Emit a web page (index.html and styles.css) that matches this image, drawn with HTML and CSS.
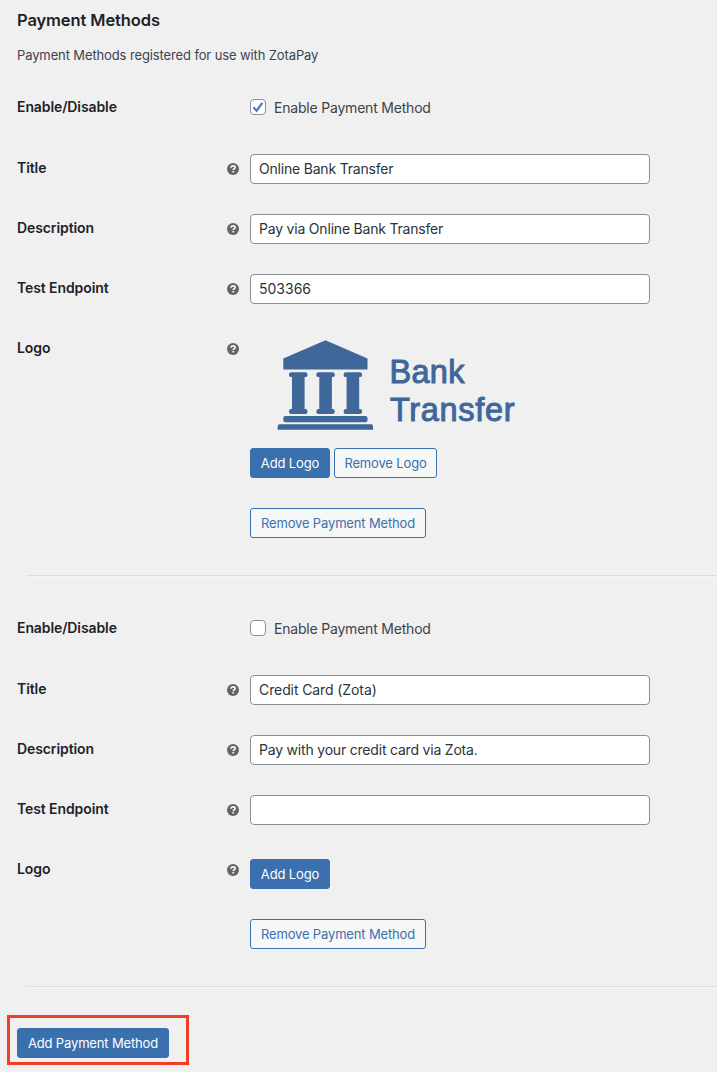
FILE: index.html
```
<!DOCTYPE html>
<html lang="en">
<head>
<meta charset="utf-8">
<title>Payment Methods</title>
<link rel="stylesheet" href="styles.css">
</head>
<body>
<svg width="0" height="0" class="defs">
  <symbol id="help" viewBox="0 0 12 12">
    <circle cx="6" cy="6" r="6" fill="#646464"/>
    <path d="M4 4.700C4.100 3.400 5 2.900 6.100 2.900c1.200 0 2 .6 2 1.500 0 1.300-1.900 1.300-1.900 2.700" fill="none" stroke="#f0f0f1" stroke-width="1.700"/>
    <rect x="5.300" y="7.900" width="1.800" height="1.600" fill="#f0f0f1"/>
  </symbol>
</svg>
<main class="page">
  <h2 class="heading"><span>Payment Methods</span></h2>
  <p class="intro"><span>Payment Methods registered for use with ZotaPay</span></p>

  <section class="method">
    <div class="row row-check">
      <div class="label"><span>Enable/Disable</span></div>
      <label class="check"><span class="box"><svg width="14" height="14" viewBox="0 0 14 14"><path d="M2.500 7.300 5.600 10.700 11.300 2.900" fill="none" stroke="#3f7fc6" stroke-width="2.200"/></svg></span><span class="check-text">Enable Payment Method</span></label>
    </div>
    <div class="row">
      <div class="label"><span>Title</span></div><svg class="help"><use href="#help"/></svg>
      <div class="input"><span>Online Bank Transfer</span></div>
    </div>
    <div class="row">
      <div class="label"><span>Description</span></div><svg class="help"><use href="#help"/></svg>
      <div class="input"><span>Pay via Online Bank Transfer</span></div>
    </div>
    <div class="row">
      <div class="label"><span>Test Endpoint</span></div><svg class="help"><use href="#help"/></svg>
      <div class="input"><span class="number">503366</span></div>
    </div>
    <div class="row">
      <div class="label"><span>Logo</span></div><svg class="help"><use href="#help"/></svg>
      <div class="field">
        <svg class="logo" width="280" height="114" viewBox="250 334 280 114">
          <g fill="#3f6799">
            <path d="M325.500 340.300 367.500 358.500V369.500H283.300V358.500Z"/>
            <g id="pillar">
              <rect x="289" y="372.300" width="18.500" height="4.800" rx="2.200"/>
              <rect x="292" y="374" width="12.600" height="38"/>
              <rect x="289" y="409" width="18.500" height="5" rx="2.200"/>
            </g>
            <use href="#pillar" x="27.300"/>
            <use href="#pillar" x="54.600"/>
            <rect x="283.300" y="416" width="84.200" height="6.200" rx="2"/>
            <path d="M279.700 424.200H371.200Q373 424.200 373 426.200V429.700H277.700V426.200Q277.700 424.200 279.700 424.200Z"/>
          </g>
          <g class="logo-text">
            <text x="389.500" y="382.600" textLength="75">Bank</text>
            <text x="390" y="420.800" textLength="124.500">Transfer</text>
          </g>
        </svg>
        <div class="buttons"><button class="btn primary add-logo">Add Logo</button><button class="btn remove-logo">Remove Logo</button></div>
      </div>
    </div>
    <div class="row row-remove"><button class="btn remove-method">Remove Payment Method</button></div>
  </section>
  <div class="rule"></div>

  <section class="method">
    <div class="row row-check">
      <div class="label"><span>Enable/Disable</span></div>
      <label class="check"><span class="box"></span><span class="check-text">Enable Payment Method</span></label>
    </div>
    <div class="row">
      <div class="label"><span>Title</span></div><svg class="help"><use href="#help"/></svg>
      <div class="input"><span class="card-title">Credit Card (Zota)</span></div>
    </div>
    <div class="row">
      <div class="label"><span>Description</span></div><svg class="help"><use href="#help"/></svg>
      <div class="input"><span>Pay with your credit card via Zota.</span></div>
    </div>
    <div class="row">
      <div class="label"><span>Test Endpoint</span></div><svg class="help"><use href="#help"/></svg>
      <div class="input"></div>
    </div>
    <div class="row">
      <div class="label"><span>Logo</span></div><svg class="help"><use href="#help"/></svg>
      <div class="field field-empty"><div class="buttons"><button class="btn primary add-logo">Add Logo</button></div></div>
    </div>
    <div class="row row-remove"><button class="btn remove-method">Remove Payment Method</button></div>
  </section>
  <div class="rule"></div>

  <div class="highlight"><button class="btn primary add-method">Add Payment Method</button></div>
</main>
</body>
</html>
```
FILE: styles.css
```
* { box-sizing: border-box; }
body {
  margin: 0;
  background: #f0f0f1;
  color: #3c434a;
  font-family: Inter, "Liberation Sans", sans-serif;
  font-size: 13px;
  overflow: hidden;
}
.defs { position: absolute; }
.page { height: 1072px; padding-top: 8px; overflow: hidden; }
.heading {
  margin: 0 0 0 17px;
  font-size: 16.500px;
  line-height: 24px;
  font-weight: 600;
  letter-spacing: -0.1px;
  color: #1d2327;
}
.intro { margin: 13px 0 1px 17px; line-height: 20px; letter-spacing: -0.12px; }
.method { padding-top: 12px; }
.row {
  display: grid;
  grid-template-columns: 210px 23px 400px;
  padding: 15px 0 15px 17px;
  align-items: start;
}
.row-check { height: 61px; grid-template-columns: 233px 400px; }
.label {
  padding-top: 4px;
  line-height: 20px;
  font-size: 14px;
  font-weight: 600;
  letter-spacing: -0.1px;
  color: #1d2327;
}
.help { width: 12px; height: 12px; margin-top: 9px; }
.check {
  display: flex;
  align-items: center;
  gap: 8px;
  height: 30px;
  font-size: 14px;
  letter-spacing: -0.2px;
}
.check-text { padding-bottom: 2px; }
.box {
  width: 16px;
  height: 16px;
  border: 1px solid #8c8f94;
  border-radius: 4px;
  background: #fff;
  display: block;
  margin-top: -2px;
}
.box svg { display: block; }
.input {
  height: 30px;
  border: 1px solid #8c8f94;
  border-radius: 4px;
  background: #fff;
  color: #2c3338;
  font-size: 14px;
  line-height: 28px;
  padding-left: 8px;
  letter-spacing: -0.2px;
}
.input span { display: block; }
.number { letter-spacing: 0; }
.card-title { letter-spacing: -0.1px; }
.logo { display: block; }
.logo-text {
  font-family: "Liberation Sans", Arial, sans-serif;
  font-size: 32.500px;
  fill: #3f6799;
  stroke: #3f6799;
  stroke-width: 1px;
}
.field-empty { padding-top: 4px; }
.buttons { display: flex; gap: 4px; }
.btn {
  height: 30px;
  padding: 0;
  border: 1px solid #3b70ae;
  border-radius: 3px;
  background: #f6f7f7;
  color: #3b70ae;
  font: 13px/28px Inter, "Liberation Sans", sans-serif;
  letter-spacing: -0.15px;
  white-space: nowrap;
}
.primary { background: #3b70ae; color: #fff; }
.add-logo { width: 80px; }
.remove-logo { width: 103px; }
.remove-method { width: 176px; }
.add-method { width: 152px; }
.row-remove { display: block; padding-left: 250px; }
.rule { margin: 22px 0 0 26px; height: 2px; border-top: 1px solid #dcdcde; border-bottom: 1px solid #f6f6f7; }
.rule + .method { padding-top: 22px; }
.highlight {
  width: 182px;
  height: 50px;
  margin: 27px 0 0 7px;
  border: 3px solid #ee3f25;
  padding: 10px 0 0 7px;
}
```
